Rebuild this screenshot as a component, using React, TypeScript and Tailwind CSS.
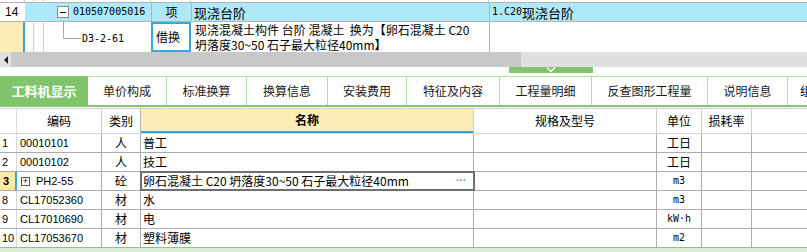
import React from 'react';

const COL = {
  no: 'w-[17px]',
  code: 'w-[85px]',
  type: 'w-[39px]',
  name: 'w-[333px]',
  spec: 'w-[183px]',
  unit: 'w-[45px]',
  loss: 'w-[50px]',
};

const TABS = [
  { label: '单价构成', w: 'w-[79px]' },
  { label: '标准换算', w: 'w-[80px]' },
  { label: '换算信息', w: 'w-[81px]' },
  { label: '安装费用', w: 'w-[79px]' },
  { label: '特征及内容', w: 'w-[93px]' },
  { label: '工程量明细', w: 'w-[92px]' },
  { label: '反查图形工程量', w: 'w-[116px]' },
  { label: '说明信息', w: 'w-[80px]' },
];

const ROWS = [
  { no: '1', code: '00010101', type: '人', name: '普工', unit: '工日' },
  { no: '2', code: '00010102', type: '人', name: '技工', unit: '工日' },
  { no: '3', code: 'PH2-55', type: '砼', name: '卵石混凝土 C20 坍落度30~50 石子最大粒径40mm', unit: 'm3', active: true },
  { no: '8', code: 'CL17052360', type: '材', name: '水', unit: 'm3' },
  { no: '9', code: 'CL17010690', type: '材', name: '电', unit: 'kW·h' },
  { no: '10', code: 'CL17053670', type: '材', name: '塑料薄膜', unit: 'm2' },
];

const SANS = "font-['Liberation_Sans',sans-serif]";
const MONO = "font-['DejaVu_Sans_Mono',monospace]";

const App: React.FC = () => {
  return (
    <div className="w-[807px] h-[252px] overflow-hidden bg-white text-[12px] leading-none text-black font-['Noto_Sans_CJK_SC',sans-serif]">
      {/* tail of the row above */}
      <div className="flex h-[2px]">
        <div className="w-[25px] border-r border-[#d0d0d0]" />
        <div className="w-[9px] border-r border-[#d0d0d0]" />
        <div className="w-[10px] border-r border-[#d0d0d0]" />
        <div className="w-[107px] border-r border-[#d0d0d0]" />
        <div className="w-[40px] border-r border-[#d0d0d0]" />
        <div className="w-[298px] border-r border-[#d0d0d0]" />
        <div className="flex-1" />
      </div>

      {/* row 14 */}
      <div className="flex h-[20px] border-y border-[#b4b4b4]">
        <div className={`w-[25px] flex items-center pl-[5px] ${SANS}`}>14</div>
        <div className="flex-1 flex bg-[#aee9fa]">
          <div className="w-[126px] flex items-center pl-[32px] gap-[4px]">
            <span className="w-[12px] h-[12px] border border-[#8a8a8a] bg-white flex items-center justify-center">
              <span className="w-[6px] h-[1px] bg-black" />
            </span>
            <span className={`${MONO} text-[10px]`}>010507005016</span>
          </div>
          <div className="w-[40px] border-l border-[#b4b4b4] flex items-center justify-center">项</div>
          <div className="w-[298px] border-l border-[#b4b4b4] flex items-center pl-[2px] text-[13px]">现浇台阶</div>
          <div className="flex-1 border-l border-[#b4b4b4] flex items-center pl-[2px] text-[13px]">
            <span className={`${MONO} text-[10px]`}>1.C20</span>现浇台阶
          </div>
        </div>
      </div>

      {/* row D3-2-61 */}
      <div className="flex h-[30px]">
        <div className="w-[25px] bg-[#feedb7] border-r-2 border-[#3aa3d6]" />
        <div className="w-[9px] border-r border-[#d0d0d0]" />
        <div className="w-[10px] border-r border-[#d0d0d0]" />
        <div className="w-[107px] flex">
          <svg width="38" height="30" className="shrink-0">
            <path d="M19.5 0 V16.5 H37" stroke="#a8a8a8" strokeWidth="1" fill="none" />
          </svg>
          <span className={`${MONO} text-[10px] pt-[12px]`}>D3-2-61</span>
        </div>
        <div className="w-[40px] border-2 border-[#3aa8d8] flex items-center pl-[3px]">借换</div>
        <div className="w-[298px] pl-[4px] leading-[15px] whitespace-pre overflow-hidden">
          <div>现浇混凝土构件 台阶 混凝土  换为【卵石混凝土 C20</div>
          <div>坍落度30~50 石子最大粒径40mm】</div>
        </div>
        <div className="flex-1 border-l border-[#b4b4b4]" />
      </div>

      {/* horizontal scrollbar */}
      <div className="flex h-[15px] bg-[#e0e0e0]">
        <div className="w-[11px] flex items-center justify-center">
          <svg width="6" height="8">
            <path d="M5 0 L1 4 L5 8 Z" fill="#222" />
          </svg>
        </div>
        <div className="w-[510px] bg-[#c8c8c8]" />
      </div>

      {/* splitter handle */}
      <div className="h-[9px] flex">
        <div className="ml-[509px] w-[84px] h-[6px] bg-[#84c46f] flex items-center justify-center">
          <svg width="10" height="6">
            <path d="M1 0.5 L5 4.5 L9 0.5" stroke="#fff" strokeWidth="1.3" fill="none" />
          </svg>
        </div>
      </div>

      {/* tabs */}
      <div className="flex h-[29px] overflow-hidden">
        <div className="w-[88px] shrink-0 bg-[#80c46b] text-white font-bold text-[13px] flex items-center justify-center">
          工料机显示
        </div>
        {TABS.map(t => (
          <div
            key={t.label}
            className={`${t.w} shrink-0 border-t border-r border-[#b5e2a6] flex items-center justify-center text-[#1a1a1a]`}
          >
            {t.label}
          </div>
        ))}
        <div className="flex-1 border-t border-[#b5e2a6] flex items-center pl-[12px] whitespace-nowrap overflow-hidden">
          组价方案
        </div>
      </div>
      <div className="h-[2px] bg-[#86c872]" />
      <div className="h-[1px]" />

      {/* header */}
      <div className="flex h-[26px] border-y border-[#d4d4d4]">
        <div className={`${COL.no} border-r border-[#d8d8d8]`} />
        <div className={`${COL.code} border-r border-[#d0d0d0] flex items-center justify-center`}>编码</div>
        <div className={`${COL.type} border-r border-[#b0b0b0] flex items-center justify-center`}>类别</div>
        <div className={`${COL.name} border-r border-[#d0d0d0] bg-[#feedb7] border-b-2 border-b-[#3aa3d6] flex items-center justify-center font-bold`}>名称</div>
        <div className={`${COL.spec} border-r border-[#d0d0d0] flex items-center justify-center`}>规格及型号</div>
        <div className={`${COL.unit} border-r border-[#d0d0d0] flex items-center justify-center`}>单位</div>
        <div className={`${COL.loss} border-r border-[#d0d0d0] flex items-center justify-center`}>损耗率</div>
        <div className="flex-1" />
      </div>

      {/* material rows */}
      {ROWS.map(r => (
        <div key={r.no} className="flex h-[19px] border-b border-[#acacac]">
          <div
            className={`${COL.no} flex items-center pl-[2px] ${SANS} text-[11px] ${
              r.active ? 'bg-[#fde9a6] border-r-2 border-[#3aa3d6] font-bold pl-[3px]' : 'border-r border-[#d8d8d8]'
            }`}
          >
            {r.no}
          </div>
          <div className={`${COL.code} border-r border-[#acacac] flex items-center pl-[3px] ${SANS} text-[11px]`}>
            {r.active && (
              <span className="w-[9px] h-[9px] border border-[#555] mr-[6px] ml-[1px] flex items-center justify-center text-[9px] leading-none">
                +
              </span>
            )}
            {r.code}
          </div>
          <div className={`${COL.type} border-r border-[#acacac] flex items-center justify-center`}>{r.type}</div>
          <div
            className={`${COL.name} border-r border-[#acacac] flex items-center justify-between pl-[2px] pr-[7px] whitespace-pre ${
              r.active ? 'outline-2 outline-offset-[-1px] outline-[#6f6f6f]' : ''
            }`}
          >
            <span>{r.name}</span>
            {r.active && <span className={`text-[#4a90d9] ${SANS} text-[10px] font-bold`}>···</span>}
          </div>
          <div className={`${COL.spec} border-r border-[#acacac]`} />
          <div className={`${COL.unit} border-r border-[#acacac] flex items-center justify-center ${r.unit.startsWith('工') ? '' : `${MONO} text-[10px]`}`}>
            {r.unit}
          </div>
          <div className={`${COL.loss} border-r border-[#acacac]`} />
          <div className="flex-1" />
        </div>
      ))}

      <div className="h-[5px] bg-[#d5efd1]" />
    </div>
  );
};

export default App;
